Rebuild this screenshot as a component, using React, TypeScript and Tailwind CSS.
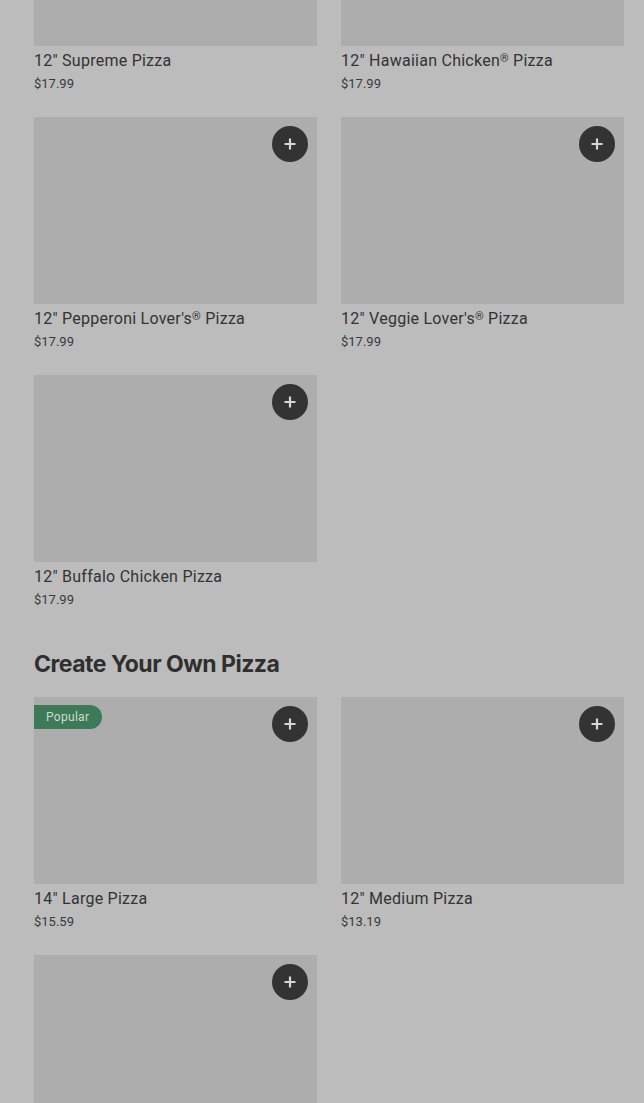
import React from "react";

type Item = { name: string; price: string; popular?: boolean };

const rows1: Item[][] = [
  [
    { name: "12\" Supreme Pizza", price: "$17.99" },
    { name: "12\" Hawaiian Chicken® Pizza", price: "$17.99" },
  ],
  [
    { name: "12\" Pepperoni Lover's® Pizza", price: "$17.99" },
    { name: "12\" Veggie Lover's® Pizza", price: "$17.99" },
  ],
  [{ name: "12\" Buffalo Chicken Pizza", price: "$17.99" }],
];

const rows2: Item[][] = [
  [
    { name: "14\" Large Pizza", price: "$15.59", popular: true },
    { name: "12\" Medium Pizza", price: "$13.19" },
  ],
  [{ name: "", price: "" }],
];

function Plus() {
  return (
    <div className="absolute right-[9px] top-[9px] flex h-[36px] w-[36px] items-center justify-center rounded-full bg-[#333333]">
      <svg width="14" height="14" viewBox="0 0 14 14">
        <path d="M7 1.5v11M1.5 7h11" stroke="#d6d6d6" strokeWidth="2.2" />
      </svg>
    </div>
  );
}

function Name({ text }: { text: string }) {
  const parts = text.split("®");
  return (
    <>
      {parts.map((p, i) => (
        <React.Fragment key={i}>
          {p}
          {i < parts.length - 1 && (
            <span className="relative top-[-4px] text-[11px] leading-[0]">®</span>
          )}
        </React.Fragment>
      ))}
    </>
  );
}

function Card({ item }: { item: Item }) {
  return (
    <div className="flex flex-col">
      <div className="relative h-[187px] w-full bg-[#adadad]">
        {item.popular && (
          <div className="absolute left-0 top-[8px] flex h-[24px] items-center rounded-r-full bg-[#3d7a57] pl-[12px] pr-[13px] text-[12px] tracking-[0.3px] text-[#c9dccf]">
            Popular
          </div>
        )}
        <Plus />
      </div>
      {item.name && (
        <>
          <div className="mt-[5px] h-[20px] overflow-visible text-[16px] leading-[20px] tracking-[0.25px] text-[#333333]">
            <Name text={item.name} />
          </div>
          <div className="mt-[3px] text-[13px] leading-[20px] text-[#3a3a3a]">{item.price}</div>
        </>
      )}
    </div>
  );
}

function Grid({ rows }: { rows: Item[][] }) {
  return (
    <div className="flex flex-col gap-[23px]">
      {rows.map((r, i) => (
        <div key={i} className="grid grid-cols-2 gap-[24px]">
          {r.map((it, j) => (
            <Card key={j} item={it} />
          ))}
        </div>
      ))}
    </div>
  );
}

export default function App() {
  return (
    <div
      className="h-[1103px] overflow-hidden bg-[#bcbcbc]"
      style={{ fontFamily: "Roboto, 'Noto Sans', sans-serif" }}
    >
      <div className="mt-[-141px] pl-[34px] pr-[20px]">
        <Grid rows={rows1} />
        <h2
          className="mt-[39px] mb-[18px] text-[23px] font-bold leading-[30px] tracking-[-0.5px] text-[#2f2f2f]"
          style={{ fontFamily: "Inter, 'Noto Sans', sans-serif" }}
        >
          Create Your Own Pizza
        </h2>
        <Grid rows={rows2} />
      </div>
    </div>
  );
}
